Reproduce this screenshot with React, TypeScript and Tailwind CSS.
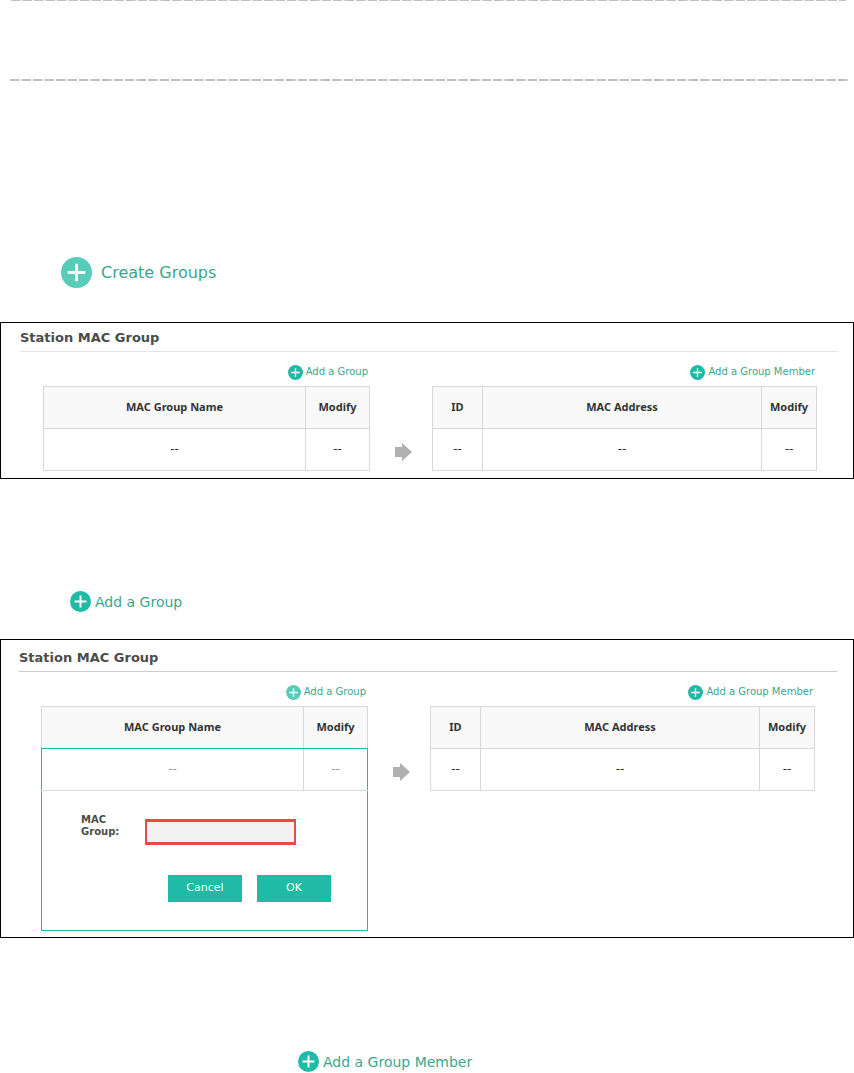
import { useState } from 'react'
import clsx from 'clsx'

interface ActionProps {
  label: string
  iconClass: string
  textClass: string
  faded?: boolean
}

function PlusIcon({ className }: { className?: string }) {
  return (
    <svg viewBox="0 0 30 30" className={className} aria-hidden="true">
      <circle cx="15" cy="15" r="15" fill="currentColor" />
      <path d="M15 6.5v17M6.5 15h17" stroke="#fff" strokeWidth="2.8" fill="none" />
    </svg>
  )
}

function ActionButton({ label, iconClass, textClass, faded }: ActionProps) {
  return (
    <button type="button" className={clsx('flex items-center text-[#3ba68f]', textClass)}>
      <PlusIcon className={clsx('shrink-0', iconClass, faded ? 'text-[#57ccb8]' : 'text-[#20bba6]')} />
      {label}
    </button>
  )
}

function DashedRule({ height }: { height: number }) {
  return (
    <svg className="block w-full" height={height} aria-hidden="true">
      <line
        x1="0"
        x2="100%"
        y1={height / 2}
        y2={height / 2}
        stroke="#bfbfbf"
        strokeWidth={height}
        strokeDasharray="9.5 2"
      />
    </svg>
  )
}

function Arrow() {
  return (
    <svg width="17" height="18" viewBox="0 0 17 18" className="mt-[79px] ml-[25px]" aria-hidden="true">
      <path d="M0 4h7V0l10 9-10 9v-4H0z" fill="#b0b0b0" />
    </svg>
  )
}

const table = 'w-full table-fixed border-collapse'
const head =
  "h-[42px] border border-[#d8d8d8] bg-[#f9f9f9] p-0 text-center font-['Noto_Sans',Tahoma,sans-serif] text-[11px] font-bold text-[#333]"
const cell = 'h-[42px] border border-[#d8d8d8] p-0 pb-0.5 text-center text-[12px]'

function GroupForm() {
  const [name, setName] = useState('')

  return (
    <form className="h-[139px] pt-[23px] pl-[39px] text-left" onSubmit={(e) => e.preventDefault()}>
      <div className="flex items-start">
        <label htmlFor="mac-group" className="w-16 text-[10px] leading-3 font-bold text-[#4c4c4c]">
          MAC
          <br />
          Group:
        </label>
        <input
          id="mac-group"
          type="text"
          value={name}
          onChange={(e) => setName(e.target.value)}
          className="mt-[5px] h-[26px] w-[151px] border-2 border-y-3 border-[#ec4b45] bg-[#f2f2f2] px-1 text-[11px] outline-none"
        />
      </div>
      <div className="mt-[30px] mr-9 flex justify-end gap-[15px] text-[11px] text-white">
        <button type="button" className="h-[27px] w-[74px] bg-[#20bba6]">
          Cancel
        </button>
        <button type="submit" className="h-[27px] w-[74px] bg-[#20bba6]">
          OK
        </button>
      </div>
    </form>
  )
}

function GroupTable({ editing }: { editing?: boolean }) {
  return (
    <table className={table}>
      <colgroup>
        <col />
        <col className="w-16" />
      </colgroup>
      <thead>
        <tr>
          <th className={clsx(head, editing && 'border-b-[#20bba6]')}>MAC Group Name</th>
          <th className={clsx(head, editing && 'border-b-[#20bba6]')}>Modify</th>
        </tr>
      </thead>
      <tbody>
        <tr>
          <td className={clsx(cell, editing ? 'border-l-[#20bba6] text-[#999]' : 'text-[#333]')}>--</td>
          <td className={clsx(cell, editing ? 'border-r-[#20bba6] text-[#999]' : 'text-[#333]')}>--</td>
        </tr>
        {editing && (
          <tr>
            <td colSpan={2} className="border border-[#20bba6] p-0">
              <GroupForm />
            </td>
          </tr>
        )}
      </tbody>
    </table>
  )
}

function MemberTable() {
  return (
    <table className={clsx(table, 'text-[#333]')}>
      <colgroup>
        <col className="w-[50px]" />
        <col />
        <col className="w-[55px]" />
      </colgroup>
      <thead>
        <tr>
          <th className={head}>ID</th>
          <th className={head}>MAC Address</th>
          <th className={head}>Modify</th>
        </tr>
      </thead>
      <tbody>
        <tr>
          <td className={cell}>--</td>
          <td className={cell}>--</td>
          <td className={cell}>--</td>
        </tr>
      </tbody>
    </table>
  )
}

function StationPanel({ editing }: { editing?: boolean }) {
  return (
    <section
      className={clsx(
        'border border-black',
        editing ? 'pt-2 pr-4 pb-1.5 pl-[18px]' : 'pt-[5px] pr-[15px] pb-[7px] pl-[19px]',
      )}
    >
      <h2
        className={clsx(
          'h-6 border-b text-[13px] leading-5 font-bold text-[#4c4c4c]',
          editing ? 'border-[#ccc]' : 'border-[#e4e4e4]',
        )}
      >
        Station MAC Group
      </h2>
      <div className={clsx('grid grid-cols-[327fr_62fr_385fr] pt-3', editing ? 'px-[22px]' : 'pr-[21px] pl-[23px]')}>
        <div>
          <div className="mb-1.5 flex justify-end pr-0.5">
            <ActionButton label="Add a Group" iconClass="size-[15px]" textClass="gap-[3px] text-[10px] leading-4" faded={editing} />
          </div>
          <GroupTable editing={editing} />
        </div>
        <Arrow />
        <div>
          <div className="mb-1.5 flex justify-end pr-0.5">
            <ActionButton label="Add a Group Member" iconClass="size-[15px]" textClass="gap-[3px] text-[10px] leading-4" />
          </div>
          <MemberTable />
        </div>
      </div>
    </section>
  )
}

export default function App() {
  return (
    <main className="bg-white pb-px font-['DejaVu_Sans',Verdana,sans-serif]">
      <div className="space-y-[78px] pr-[5px] pl-2.5">
        <div className="pr-[3px] pl-px">
          <DashedRule height={1} />
        </div>
        <DashedRule height={2} />
      </div>

      <div className="pt-44 pb-[34px] pl-[61px]">
        <ActionButton label="Create Groups" iconClass="size-[31px]" textClass="gap-[9px] text-[16px] leading-5" faded />
      </div>
      <StationPanel />

      <div className="pt-[112px] pb-[27px] pl-[70px]">
        <ActionButton label="Add a Group" iconClass="size-[21px]" textClass="gap-1 text-[14px] leading-5" />
      </div>
      <StationPanel editing />

      <div className="pt-[113px] pl-[298px]">
        <ActionButton label="Add a Group Member" iconClass="size-[21px]" textClass="gap-1 text-[14px] leading-5" />
      </div>
    </main>
  )
}
